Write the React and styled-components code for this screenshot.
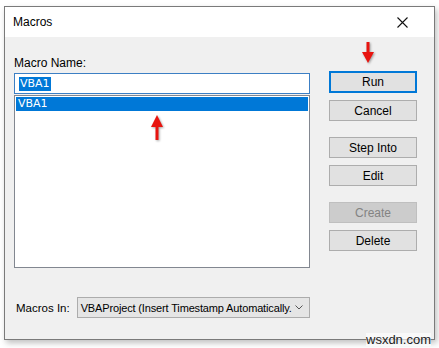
import React from 'react';
import styled, { createGlobalStyle } from 'styled-components';

const GlobalStyle = createGlobalStyle`
  html, body {
    margin: 0;
    padding: 0;
    background: #ffffff;
  }
  body {
    font-family: 'Liberation Sans', Arial, sans-serif;
    font-size: 12px;
    color: #000;
  }
`

const Page = styled.div`
  position: relative;
  width: 439px;
  height: 348px;
  padding: 6px 0 0 4px;
  box-sizing: border-box;
`

const Window = styled.div`
  width: 431px;
  height: 334px;
  box-sizing: border-box;
  border: 1px solid #7a7a7a;
  background: #f0f0f0;
  box-shadow: 2px 3px 6px rgba(0, 0, 0, 0.25);
  display: flex;
  flex-direction: column;
`

const TitleBar = styled.div`
  height: 30px;
  background: #ffffff;
  display: flex;
  align-items: center;
  justify-content: space-between;
  padding: 0 26px 0 8px;
  font-size: 12px;
`

const Body = styled.div`
  flex: 1;
  display: flex;
  gap: 19px;
  padding: 19px 0 0 9px;
`

const LeftCol = styled.div`
  width: 296px;
  display: flex;
  flex-direction: column;
`

const Label = styled.div`
  height: 14px;
  line-height: 14px;
  margin-bottom: 3px;
`

const NameInput = styled.div`
  height: 21px;
  box-sizing: border-box;
  border: 1px solid #3c7fc4;
  background: #fff;
  display: flex;
  align-items: center;
  padding-left: 4px;
  font-family: 'DejaVu Sans', Tahoma, sans-serif;
  font-size: 11px;
`

const Selected = styled.span`
  background: #0078d7;
  color: #fff;
  line-height: 14px;
  padding: 0 1px;
`

const ListBox = styled.div`
  margin-top: 1px;
  height: 173px;
  box-sizing: border-box;
  border: 1px solid #828790;
  background: #fff;
  padding: 1px;
`

const ListItem = styled.div`
  height: 14px;
  line-height: 14px;
  padding-left: 2px;
  font-family: 'DejaVu Sans', Tahoma, sans-serif;
  font-size: 11px;
  background: ${p => (p.$active ? '#0078d7' : 'transparent')};
  color: ${p => (p.$active ? '#fff' : '#000')};
`

const BottomRow = styled.div`
  margin-top: 29px;
  display: flex;
  align-items: center;
  gap: 7px;
  margin-left: 2px;
  white-space: nowrap;
`

const InLabel = styled.span`
  flex-shrink: 0;
  font-size: 11.5px;
`

const SelectBox = styled.div`
  flex: 1;
  min-width: 0;
  height: 21px;
  box-sizing: border-box;
  border: 1px solid #acacac;
  background: #e5e5e5;
  display: flex;
  align-items: center;
  gap: 4px;
  padding: 0 6px 0 3px;
  font-size: 11px;
  letter-spacing: -0.15px;
`

const SelectText = styled.span`
  flex: 1;
  min-width: 0;
`

const RightCol = styled.div`
  width: 88px;
  display: flex;
  flex-direction: column;
  padding-top: 15px;
`

const Button = styled.div`
  height: ${p => (p.$default ? 22 : 21)}px;
  box-sizing: border-box;
  border: ${p => (p.$default ? '2px solid #0078d7' : '1px solid ' + (p.$disabled ? '#bfbfbf' : '#adadad'))};
  background: ${p => (p.$disabled ? '#cccccc' : '#e1e1e1')};
  color: ${p => (p.$disabled ? '#838383' : '#000')};
  display: flex;
  align-items: center;
  justify-content: center;
  margin-top: ${p => p.$gap || 0}px;
`

const Watermark = styled.div`
  position: absolute;
  left: 366px;
  top: 333px;
  font-size: 13px;
  color: #222;
  background: rgba(255, 255, 255, 0.6);
  line-height: 13px;
`

const Arrow = styled.svg`
  position: absolute;
  left: ${p => p.$x}px;
  top: ${p => p.$y}px;
  filter: drop-shadow(1px 1px 1px rgba(0, 0, 0, 0.35));
`

function DownArrow({ x, y }) {
  return (
    <Arrow $x={x} $y={y} width="12" height="22" viewBox="0 0 12 22">
      <rect x="4.5" y="0" width="3" height="11" fill="#e8140f" />
      <polygon points="0,10 12,10 6,21" fill="#e8140f" />
    </Arrow>
  )
}

function UpArrow({ x, y }) {
  return (
    <Arrow $x={x} $y={y} width="12" height="26" viewBox="0 0 12 26">
      <polygon points="6,0 12,12 0,12" fill="#e8140f" />
      <rect x="4.5" y="11" width="3" height="14" fill="#e8140f" />
    </Arrow>
  )
}

export default function App() {
  return (
    <>
      <GlobalStyle />
      <Page>
        <Window>
          <TitleBar>
            <span>Macros</span>
            <svg width="11" height="11" viewBox="0 0 11 11">
              <path d="M0.5 0.5 L10.5 10.5 M10.5 0.5 L0.5 10.5" stroke="#111" strokeWidth="1.1" />
            </svg>
          </TitleBar>
          <Body>
            <LeftCol>
              <Label>Macro Name:</Label>
              <NameInput><Selected>VBA1</Selected></NameInput>
              <ListBox>
                <ListItem $active>VBA1</ListItem>
              </ListBox>
              <BottomRow>
                <InLabel>Macros In:</InLabel>
                <SelectBox>
                  <SelectText>VBAProject (Insert Timestamp Automatically.</SelectText>
                  <svg width="8" height="5" viewBox="0 0 8 5">
                    <path d="M0.5 0.5 L4 4 L7.5 0.5" stroke="#555" fill="none" />
                  </svg>
                </SelectBox>
              </BottomRow>
            </LeftCol>
            <RightCol>
              <Button $default>Run</Button>
              <Button $gap={7}>Cancel</Button>
              <Button $gap={16}>Step Into</Button>
              <Button $gap={7}>Edit</Button>
              <Button $gap={16} $disabled>Create</Button>
              <Button $gap={7}>Delete</Button>
            </RightCol>
          </Body>
        </Window>
        <DownArrow x={362} y={42} />
        <UpArrow x={151} y={115} />
        <Watermark>wsxdn.com</Watermark>
      </Page>
    </>
  )
}
